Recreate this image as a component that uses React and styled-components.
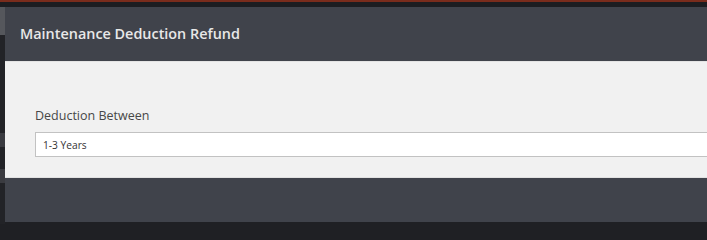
import styled, { createGlobalStyle } from 'styled-components';

const GlobalStyle = createGlobalStyle`
    html, body {
        margin: 0;
        padding: 0;
        width: 707px;
        height: 224px;
        overflow: hidden;
        background-color: #1f2024;
    }
    * {
        box-sizing: border-box;
    }
`

export default function App() {
    return (
        <>
            <GlobalStyle />
            <Screen>
                <TopBar />
                <Stage>
                    <SideStrip>
                        <SideBlock $h={28} $tone="#55575c" />
                        <SideBlock $h={98} $tone="#222327" />
                        <SideBlock $h={14} $tone="#3a3b40" />
                        <SideBlock $h={22} $tone="#222327" />
                        <SideBlock $h={14} $tone="#3a3b40" />
                    </SideStrip>
                    <Modal>
                        <ModalHeader>
                            <Title>Maintenance Deduction Refund</Title>
                        </ModalHeader>
                        <ModalBody>
                            <Label htmlFor="deduction">Deduction Between</Label>
                            <Field id="deduction" readOnly value="1-3 Years" />
                        </ModalBody>
                        <ModalFooter />
                    </Modal>
                </Stage>
            </Screen>
        </>
    )
}

const Screen = styled.div`
    width: 707px;
    height: 224px;
    display: flex;
    flex-direction: column;
    overflow: hidden;
`
const TopBar = styled.div`
    height: 7px;
    flex-shrink: 0;
    border-top: 2px solid #7a2c1c;
    background-color: #1c1d21;
`
const Stage = styled.div`
    display: flex;
    flex: 1;
    min-height: 0;
`
const SideStrip = styled.div`
    width: 5px;
    flex-shrink: 0;
    display: flex;
    flex-direction: column;
    background-color: #222327;
    overflow: hidden;
`
const SideBlock = styled.div`
    height: ${p => p.$h}px;
    flex-shrink: 0;
    background-color: ${p => p.$tone};
`
const Modal = styled.div`
    width: 760px;
    flex-shrink: 0;
    display: flex;
    flex-direction: column;
    height: 215px;
`
const ModalHeader = styled.div`
    height: 55px;
    display: flex;
    align-items: center;
    padding-left: 15px;
    padding-bottom: 1px;
    background-color: #40434b;
    border-bottom: 1px solid #e4e4e4;
`
const Title = styled.h1`
    margin: 0;
    font-family: 'Open Sans', sans-serif;
    font-weight: 600;
    font-size: 14.4px;
    color: #e8e8e8;
`
const ModalBody = styled.div`
    height: 116px;
    display: flex;
    flex-direction: column;
    padding: 45px 0 0 30px;
    background-color: #f1f1f1;
    border-bottom: 1px solid #e2e2e2;
`
const Label = styled.label`
    font-family: 'Open Sans', sans-serif;
    font-size: 12.5px;
    line-height: 17px;
    color: #474747;
    margin-bottom: 8px;
`
const Field = styled.input`
    height: 25px;
    width: 100%;
    border: 1px solid #c2c2c2;
    background-color: #ffffff;
    padding: 0 7px;
    font-family: 'Open Sans', sans-serif;
    font-size: 10.2px;
    color: #333333;
    outline: none;
`
const ModalFooter = styled.div`
    flex: 1;
    background-color: #40434b;
`
